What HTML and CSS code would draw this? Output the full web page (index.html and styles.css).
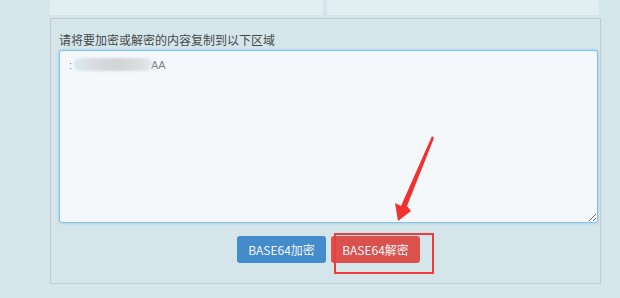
FILE: index.html
```html
<!DOCTYPE html>
<html lang="zh-CN">
<head>
  <meta charset="UTF-8">
  <title>BASE64加密解密</title>
  <link rel="stylesheet" href="styles.css">
</head>
<body>

  <div class="wrap">
    <div class="top-row">
      <div class="top-box"></div>
      <div class="top-box"></div>
    </div>

    <div class="panel">
      <div class="label">请将要加密或解密的内容复制到以下区域</div>
      <div class="area-box">
        <textarea class="content">:                          AA</textarea>
        <span class="blur"></span>
      </div>
      <div class="actions">
        <button class="btn btn-blue">BASE64加密</button>
        <button class="btn btn-red">BASE64解密</button>
      </div>
    </div>
  </div>

  <!-- screenshot annotation -->
  <div class="mark-box"></div>
  <svg class="arrow" width="620" height="298" viewBox="0 0 620 298">
    <polygon points="432,136 434,138 407,206 411,211 398,221 395,203 401,206" fill="#f2312f"/>
  </svg>

</body>
</html>
```

FILE: styles.css
```css
body {
  margin: 0;
  background-color: #d5e6ea;
  font-family: "Noto Sans CJK SC", "Liberation Sans", sans-serif;
  height: 298px;
  overflow: hidden;
}

.wrap {
  width: 551px;
  margin-left: 50px;
}

.top-row {
  display: flex;
  gap: 4px;
  padding-right: 2px;
}

.top-box {
  flex: 1;
  height: 15px;
  background-color: #e2eff2;
}

.panel {
  margin-top: 3px;
  height: 252px;
  border: 1px solid #c5cbcd;
  padding: 12px 2px 0 8px;
}

.label {
  font-size: 12px;
  line-height: 18px;
  color: #45494b;
}

.area-box {
  position: relative;
  margin-top: 1px;
}

.content {
  display: block;
  box-sizing: border-box;
  width: 539px;
  height: 173px;
  margin: 0;
  padding: 6px 9px;
  background-color: #f5f8fb;
  border: 1px solid #86bfe8;
  border-radius: 3px;
  box-shadow: 0 0 3px rgba(102, 175, 233, 0.6);
  font-family: "Liberation Sans", sans-serif;
  font-size: 11px;
  line-height: 16px;
  color: #7d8487;
  outline: none;
}

.blur {
  position: absolute;
  left: 15px;
  top: 8px;
  width: 78px;
  height: 13px;
  border-radius: 6px;
  background: linear-gradient(90deg, #dde9ee 0%, #d9dde0 25%, #d2d4d6 55%, #dadcde 80%, #e2eaee 100%);
  filter: blur(1.2px);
}

.actions {
  display: flex;
  justify-content: center;
  gap: 5px;
  margin-top: 13px;
}

.btn {
  width: 89px;
  height: 27px;
  border: none;
  border-radius: 3px;
  font-family: "Noto Sans CJK SC", "Liberation Sans", sans-serif;
  font-size: 12px;
  color: #f3f6f8;
  padding: 0;
}

.btn-blue {
  background-color: #438bcb;
}

.btn-red {
  background-color: #da514e;
}

.mark-box {
  position: absolute;
  left: 334px;
  top: 233px;
  width: 96px;
  height: 37px;
  border: 2px solid #f23a3a;
}

.arrow {
  position: absolute;
  left: 0;
  top: 0;
}
```
